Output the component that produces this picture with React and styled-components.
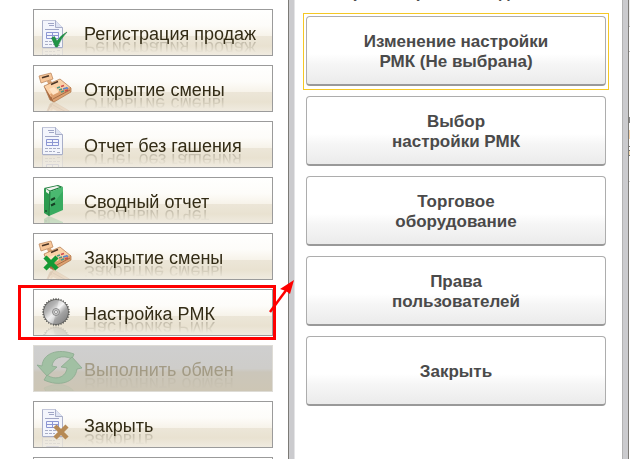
import React from 'react';
import styled, { createGlobalStyle } from 'styled-components';

const GlobalStyle = createGlobalStyle`
  * {
    box-sizing: border-box;
  }

  body {
    margin: 0;
    background: #fff;
    font-family: 'Liberation Sans', Arial, sans-serif;
  }
`

const Screen = styled.div`
  display: flex;
  height: 100vh;
  overflow: hidden;
`

const Sidebar = styled.nav`
  display: flex;
  flex: 0 0 288px;
  flex-direction: column;
  gap: 9px;
  padding: 9px 15px 0 33px;
`

const MenuItem = styled.div`
  position: relative;
  flex: none;
`

const MenuButton = styled.button`
  display: flex;
  align-items: center;
  width: 100%;
  height: 47px;
  padding: 0;
  border: 1px solid #9b9b9b;
  background: linear-gradient(#fffffe 0%, #fdfcf9 35%, #f7f3ea 57%, #ece6d8 58%, #e9e2d1 80%, #f0ebe0 100%);
  color: #332c16;
  font-family: inherit;
  font-size: 18px;
  text-align: left;
  cursor: pointer;

  &:disabled {
    border-color: #dedcd6;
    background: linear-gradient(#cfcfcf 0%, #cecdca 50%, #cbc6ba 58%, #cdc6b5 100%);
    color: #a39b85;
    cursor: default;
  }
`

const MenuLabel = styled.span`
  padding-top: 3px;
  line-height: 20px;
  white-space: nowrap;
  -webkit-box-reflect: below -6px linear-gradient(transparent 35%, rgba(0, 0, 0, 0.3) 100%);
`

const IconSlot = styled.svg`
  flex: none;
  width: 50px;
  height: 45px;
`

const Marker = styled.span`
  position: absolute;
  top: -4px;
  right: -3px;
  bottom: -4px;
  left: -15px;
  border: 3px solid #fe0000;
  pointer-events: none;
`

const Arrow = styled.svg`
  position: absolute;
  z-index: 1;
  top: -10px;
  right: -22px;
  width: 26px;
  height: 36px;
  pointer-events: none;
`

const Dialog = styled.section`
  display: flex;
  flex: 1;
  flex-direction: column;
  padding: 0 17px 0 12px;
  border: solid #cbcbce;
  border-width: 0 5px;
  background: #fff;
  box-shadow: inset 1px 0 #e4e4e6, inset -1px 0 #b2b2b2;
`

const DialogFrame = styled.div`
  display: flex;
  flex: 1;
  border: solid #7c7a76;
  border-width: 0 1px;
`

const DialogTitle = styled.h1`
  flex: none;
  height: 16px;
  margin: -14px 0 14px;
  color: #4d4d4d;
  font-size: 17px;
  line-height: 14px;
  white-space: nowrap;
`

const Actions = styled.div`
  display: flex;
  flex-direction: column;
  gap: 10px;
`

const ActionButton = styled.button`
  position: relative;
  flex: none;
  width: 100%;
  height: 70px;
  padding: 2px 40px 0;
  border: 1px solid #adadad;
  border-bottom: 2px solid #999;
  border-radius: 4px;
  background: linear-gradient(#fff 55%, #f6f6f6 70%, #ebebeb);
  color: #4a4a4a;
  font-family: inherit;
  font-size: 17px;
  font-weight: bold;
  line-height: 20px;
  white-space: pre-line;
  cursor: pointer;

  /* square focus frame around the rounded button */
  &::after {
    content: '';
    display: ${props => (props.$active ? 'block' : 'none')};
    position: absolute;
    top: -4px;
    right: -4px;
    bottom: -6px;
    left: -4px;
    border: 1px solid #f5c825;
  }
`

// edge of the window that lies behind the dialog
const Backdrop = styled.div`
  flex: 0 0 1px;
  background: linear-gradient(
    #eee 26px, #bbb 26px 27px, #fff 27px 51px, #bbb 51px 52px, #fff 52px 117px,
    #888 117px 123px, #fff 123px 130px, #f6d5ac 130px 139px, #fff 139px 146px,
    #777 146px 147px, #fff 147px 150px, #777 150px 151px, #f6dcb0 151px 155px,
    #777 155px 156px, #fff 156px 181px, #ccc 181px 182px, #fff 182px
  );
`

const Page = () => (
  <g>
    <path d="M8.500 .5h13l7 7v20h-20z" fill="#f3f5fc" stroke="#a9afc9" />
    <path d="M8.500 .5h13l7 7" fill="none" stroke="#c3c7da" />
    <path d="M21.500 .5v7h7" fill="#dfe4f3" stroke="#a9afc9" />
    <path d="M14 3.500h6M15 5.500h5M11 9.500h14" stroke="#a0a6c6" />
    <path d="M12.500 12.500h12v6h-12zM18.500 12v7M12 15.500h13" fill="none" stroke="#8c96d2" />
    <path d="M11 21.500h15M11 24.500h10M23 25.500h3" stroke="#a9aec5" strokeDasharray="3 1" />
  </g>
)

const Register = () => (
  <g>
    <path d="M13 15l4-1 2 6-4 1z" fill="#d9a273" />
    <path d="M5 10l12-3 2 6-12 4z" fill="#f7c79a" stroke="#b98358" strokeWidth=".7" />
    <path d="M8 11.700l7-2" stroke="#4a3424" strokeWidth="1.600" />
    <path d="M10 20l6 14 4 2-4-10z" fill="#a8683e" />
    <path d="M10 20l16-7 11 9-20 9z" fill="#fbd2a8" />
    <path d="M16 28l21-7v5l-17 10z" fill="#dda06f" />
    <path d="M10 20l16-7 11 9v4l-17 10-4-2z" fill="none" stroke="#ad7448" strokeWidth=".7" />
    <path d="M17 18.500l7-3" stroke="#4a3424" strokeWidth="1.400" />
    <path d="M15 23l5-2 5 5-6 3z" fill="#ffe4c6" />
    <path d="M23 22l3-1M25 24l3-1M27 26l3-1" stroke="#4e9482" strokeWidth="1.700" />
    <path d="M27 20.500l3-1M31 25l3-1" stroke="#cf4c4c" strokeWidth="1.700" />
    <path d="M29 23l3-1M32 21.500l2 1" stroke="#5b84c8" strokeWidth="1.700" />
    <path d="M19 33l17-9" stroke="#8c5834" strokeWidth=".7" />
  </g>
)

const Binder = () => (
  <g>
    <path d="M10 10l14-3 5 2-13 5z" fill="#1e7c3c" />
    <path d="M12 10.500l11-2.500 3 1-10 3.500z" fill="#f2f3ef" />
    <path d="M10 10l6 4-1 24-5-3z" fill="#2d9b4f" />
    <path d="M12 11l3 2v3l-3-2z" fill="#e9f1e6" />
    <path d="M16 14l13-5v23l-14 6z" fill="#38ab60" />
    <path d="M16 14l13-5v4L16 30z" fill="#56c37b" opacity=".6" />
    <path d="M16 14l-1 24" stroke="#156b30" strokeWidth=".8" />
    <path d="M17 22l4-2M17 27.500l4-2" stroke="#163f24" strokeWidth="2" />
    <circle cx="12" cy="33" r="1" fill="#15512b" />
  </g>
)

const teeth = Array.from({ length: 64 }, (_, i) => {
  const angle = (i * Math.PI) / 32
  const radius = i % 2 ? 12.5 : 14.2
  return `${22 + radius * Math.cos(angle)},${22 + radius * Math.sin(angle)}`
}).join(' ')

const Saw = () => (
  <g>
    <defs>
      <linearGradient id="steel" x1="0" y1="0" x2="1" y2="1">
        <stop offset="0" stopColor="#8b8b8b" />
        <stop offset=".3" stopColor="#b5b5b5" />
        <stop offset=".48" stopColor="#efefef" />
        <stop offset=".65" stopColor="#a3a3a3" />
        <stop offset="1" stopColor="#777" />
      </linearGradient>
    </defs>
    <polygon points={teeth} fill="#62625f" />
    <circle cx="22" cy="22" r="12" fill="url(#steel)" />
    <path d="M22 22L13 31a13 13 0 0 0 6 3zM22 22l9-9a13 13 0 0 0-6-3z" fill="#fff" opacity=".4" />
    <circle cx="22" cy="22" r="3.500" fill="#ccc" stroke="#777" strokeWidth=".8" />
    <circle cx="22" cy="22" r="1.500" fill="#fafafa" stroke="#666" strokeWidth=".6" />
  </g>
)

const Exchange = () => (
  <g fill="#a1c0a3" stroke="#8aa98e" strokeWidth=".8">
    <path d="M3 19l5 1C9 7 24 2 40 8l-2 5C28 8 19 12 18 20l5 1-10 9z" />
    <path d="M38 11l10 11-5 1C41 37 25 41 10 34l3-5c9 6 19 2 20-7l-6-1z" />
  </g>
)

const Check = () => (
  <path d="M17.500 28l3-1.500 2.500 4.500q4-6 10-9-6 6-9.500 15h-2z" fill="#1f9446" stroke="#167538" strokeWidth=".5" />
)

const Cross = ({ x, y, color }) => (
  <path d={`M${x - 6} ${y - 6}l12 12m0-12l-12 12`} stroke={color} strokeWidth="4.500" />
)

const GREEN = '#149a35'
const BROWN = '#b68a55'

// shape, height it is placed at, bottom edge the reflection starts from
const icons = {
  sales: { art: <Page />, top: 10, floor: 38, badge: <Check /> },
  open: { art: <Register />, top: 0, floor: 36 },
  report: { art: <Page />, top: 5, floor: 33 },
  summary: { art: <Binder />, top: 0, floor: 38 },
  shut: { art: <Register />, top: 0, floor: 36, badge: <Cross x={17} y={29} color={GREEN} /> },
  settings: { art: <Saw />, top: 0, floor: 36 },
  exchange: { art: <Exchange />, top: 0, floor: 38 },
  exit: { art: <Page />, top: 7, floor: 35, badge: <Cross x={27} y={30} color={BROWN} /> },
}

const Icon = ({ name }) => {
  const { art, top, floor, badge } = icons[name]
  return (
    <IconSlot viewBox="0 0 50 45" aria-hidden="true">
      <g transform={`translate(0 ${floor * 2 - top}) scale(1 -1)`} opacity=".2">
        {art}
      </g>
      <g transform={`translate(0 ${top})`}>{art}</g>
      {badge}
    </IconSlot>
  )
}

const menu = [
  { icon: 'sales', label: 'Регистрация продаж' },
  { icon: 'open', label: 'Открытие смены' },
  { icon: 'report', label: 'Отчет без гашения' },
  { icon: 'summary', label: 'Сводный отчет' },
  { icon: 'shut', label: 'Закрытие смены' },
  { icon: 'settings', label: 'Настройка РМК', marked: true },
  { icon: 'exchange', label: 'Выполнить обмен', disabled: true },
  { icon: 'exit', label: 'Закрыть' },
]

const actions = [
  'Изменение настройки\nРМК (Не выбрана)',
  'Выбор\nнастройки РМК',
  'Торговое\nоборудование',
  'Права\nпользователей',
  'Закрыть',
]

const App = () => {
  return (
    <Screen>
      <GlobalStyle />
      <Sidebar>
        {menu.map(item => (
          <MenuItem key={item.icon}>
            <MenuButton disabled={item.disabled}>
              <Icon name={item.icon} />
              <MenuLabel>{item.label}</MenuLabel>
            </MenuButton>
            {item.marked && (
              <>
                <Marker />
                <Arrow viewBox="0 0 26 36" aria-hidden="true">
                  <path d="M1 33L18 10" stroke="#fe0000" strokeWidth="2.500" />
                  <path d="M25 1l-4 14-4-3-6-2z" fill="#fe0000" />
                </Arrow>
              </>
            )}
          </MenuItem>
        ))}
        <MenuItem>
          <MenuButton aria-label="Меню" />
        </MenuItem>
      </Sidebar>
      <DialogFrame>
        <Dialog>
          <DialogTitle>Выберите вариант входа</DialogTitle>
          <Actions>
            {actions.map((label, index) => (
              <ActionButton key={label} $active={index === 0}>
                {label}
              </ActionButton>
            ))}
          </Actions>
        </Dialog>
      </DialogFrame>
      <Backdrop />
    </Screen>
  )
}

export default App;
